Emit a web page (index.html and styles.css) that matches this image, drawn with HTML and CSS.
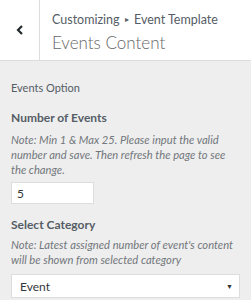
FILE: index.html
```html
<!DOCTYPE html>
<html lang="en">
<head>
  <meta charset="UTF-8">
  <title>Events Content</title>
  <link rel="stylesheet" href="styles.css">
</head>
<body>
  <div class="panel-header">
    <button class="back-btn" aria-label="Back">
      <svg width="8" height="10" viewBox="0 0 8 10"><path d="M6 1 L2 5 L6 9" fill="none" stroke="#23282d" stroke-width="2.2"/></svg>
    </button>
    <div class="panel-title">
      <span class="crumbs">Customizing <span class="sep">&#9656;</span> Event Template</span>
      <h1>Events Content</h1>
    </div>
  </div>

  <div class="panel-body">
    <p class="section-title">Events Option</p>

    <div class="control">
      <label for="numEvents">Number of Events</label>
      <p class="note">Note: Min 1 &amp; Max 25. Please input the valid number and save. Then refresh the page to see the change.</p>
      <input type="text" id="numEvents" value="5" class="small-input">
    </div>

    <div class="control">
      <label for="category">Select Category</label>
      <p class="note">Note: Latest assigned number of event's content will be shown from selected category</p>
      <div class="select-box">
        <span>Event</span>
        <span class="arrow">&#9660;</span>
      </div>
    </div>
  </div>
</body>
</html>
```

FILE: styles.css
```css
body {
  font-family: 'Lato', sans-serif;
  background-color: #eeeeee;
  color: #555d66;
  margin: 0;
  font-size: 12px;
}

.panel-header {
  display: flex;
  height: 60px;
  background-color: #fff;
  border-bottom: 1px solid #ddd;
}

.back-btn {
  width: 40px;
  height: 60px;
  padding: 0;
  border: none;
  border-right: 1px solid #ddd;
  background: #fff;
  display: flex;
  align-items: center;
  justify-content: center;
}

.panel-title {
  padding: 11px 0 0 12px;
}

.crumbs {
  display: block;
  font-size: 12.5px;
  line-height: 16px;
  color: #555d66;
}

.sep {
  font-size: 8px;
  vertical-align: 2px;
  margin: 0 2px;
}

h1 {
  margin: 2px 0 0;
  font-size: 17px;
  font-weight: 300;
  line-height: 26px;
  color: #666;
}

.panel-body {
  padding: 19px 11px 0;
}

.section-title {
  margin: 0 0 13px;
  font-size: 11px;
  line-height: 16px;
}

.control {
  margin-bottom: 12px;
}

label {
  display: block;
  font-size: 12px;
  font-weight: 700;
  line-height: 18px;
  margin-bottom: 5px;
}

.note {
  margin: 0 0 5px;
  font-size: 11.2px;
  font-style: italic;
  line-height: 15px;
  color: #72777c;
}

.small-input {
  display: block;
  width: 83px;
  height: 22px;
  box-sizing: border-box;
  padding: 0 5px;
  border: 1px solid #ddd;
  background: #fff;
  font-family: inherit;
  font-size: 12px;
  color: #32373c;
}

.control + .control label {
  margin-bottom: 3px;
}

.control + .control .note {
  margin-bottom: 7px;
}

.select-box {
  display: flex;
  justify-content: space-between;
  align-items: center;
  height: 22px;
  padding: 0 6px 0 8px;
  border: 1px solid #ddd;
  background: #fff;
  font-size: 12px;
  color: #32373c;
}

.arrow {
  font-size: 7px;
  color: #333;
}
```
